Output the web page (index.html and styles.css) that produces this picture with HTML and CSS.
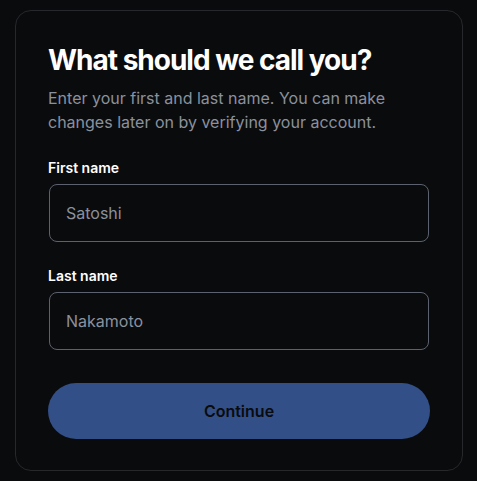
FILE: index.html
```html
<!DOCTYPE html>
<html lang="en">
<head>
<meta charset="utf-8">
<title>What should we call you?</title>
<link rel="stylesheet" href="styles.css">
</head>
<body>
<div class="card">
  <h1 class="title">What should we call you?</h1>
  <p class="subtitle">Enter your first and last name. You can make changes later on by verifying your account.</p>
  <label class="field">
    <span class="label">First name</span>
    <input class="input" type="text" placeholder="Satoshi">
  </label>
  <label class="field">
    <span class="label">Last name</span>
    <input class="input" type="text" placeholder="Nakamoto">
  </label>
  <button class="button" type="button">Continue</button>
</div>
</body>
</html>
```
FILE: styles.css
```css
* { box-sizing: border-box; }
html, body { background: #0a0b0d; }
body {
  margin: 0;
  padding: 10px 15px 10px 15px;
  font-family: Inter, "Noto Sans", "Liberation Sans", sans-serif;
  color: #ffffff;
}
.card {
  width: 448px;
  border: 1px solid #26282c;
  border-radius: 16px;
  padding: 31px 32px 31px 32px;
  display: flex;
  flex-direction: column;
  background: #0a0b0d;
}
.title {
  margin: 0;
  font-size: 28px;
  line-height: 37px;
  font-weight: 700;
  letter-spacing: -1px;
  color: #ffffff;
}
.subtitle {
  margin: 7px 0 0 0;
  font-size: 16px;
  line-height: 24px;
  color: #8a919e;
}
.field {
  display: flex;
  flex-direction: column;
  gap: 6px;
  margin-top: 24px;
}
.label {
  font-size: 14px;
  line-height: 20px;
  font-weight: 600;
  color: #ffffff;
}
.input {
  height: 58px;
  margin: 0 1px;
  border: 1px solid #5b616e;
  border-radius: 8px;
  background: transparent;
  padding: 0 16px;
  font-family: inherit;
  font-size: 16px;
  color: #ffffff;
  outline: none;
}
.input::placeholder { color: #8a919e; }
.button {
  margin-top: 33px;
  height: 56px;
  border: none;
  border-radius: 28px;
  background: #324f87;
  color: #0a0b0d;
  font-family: inherit;
  font-size: 16px;
  font-weight: 600;
}
```
